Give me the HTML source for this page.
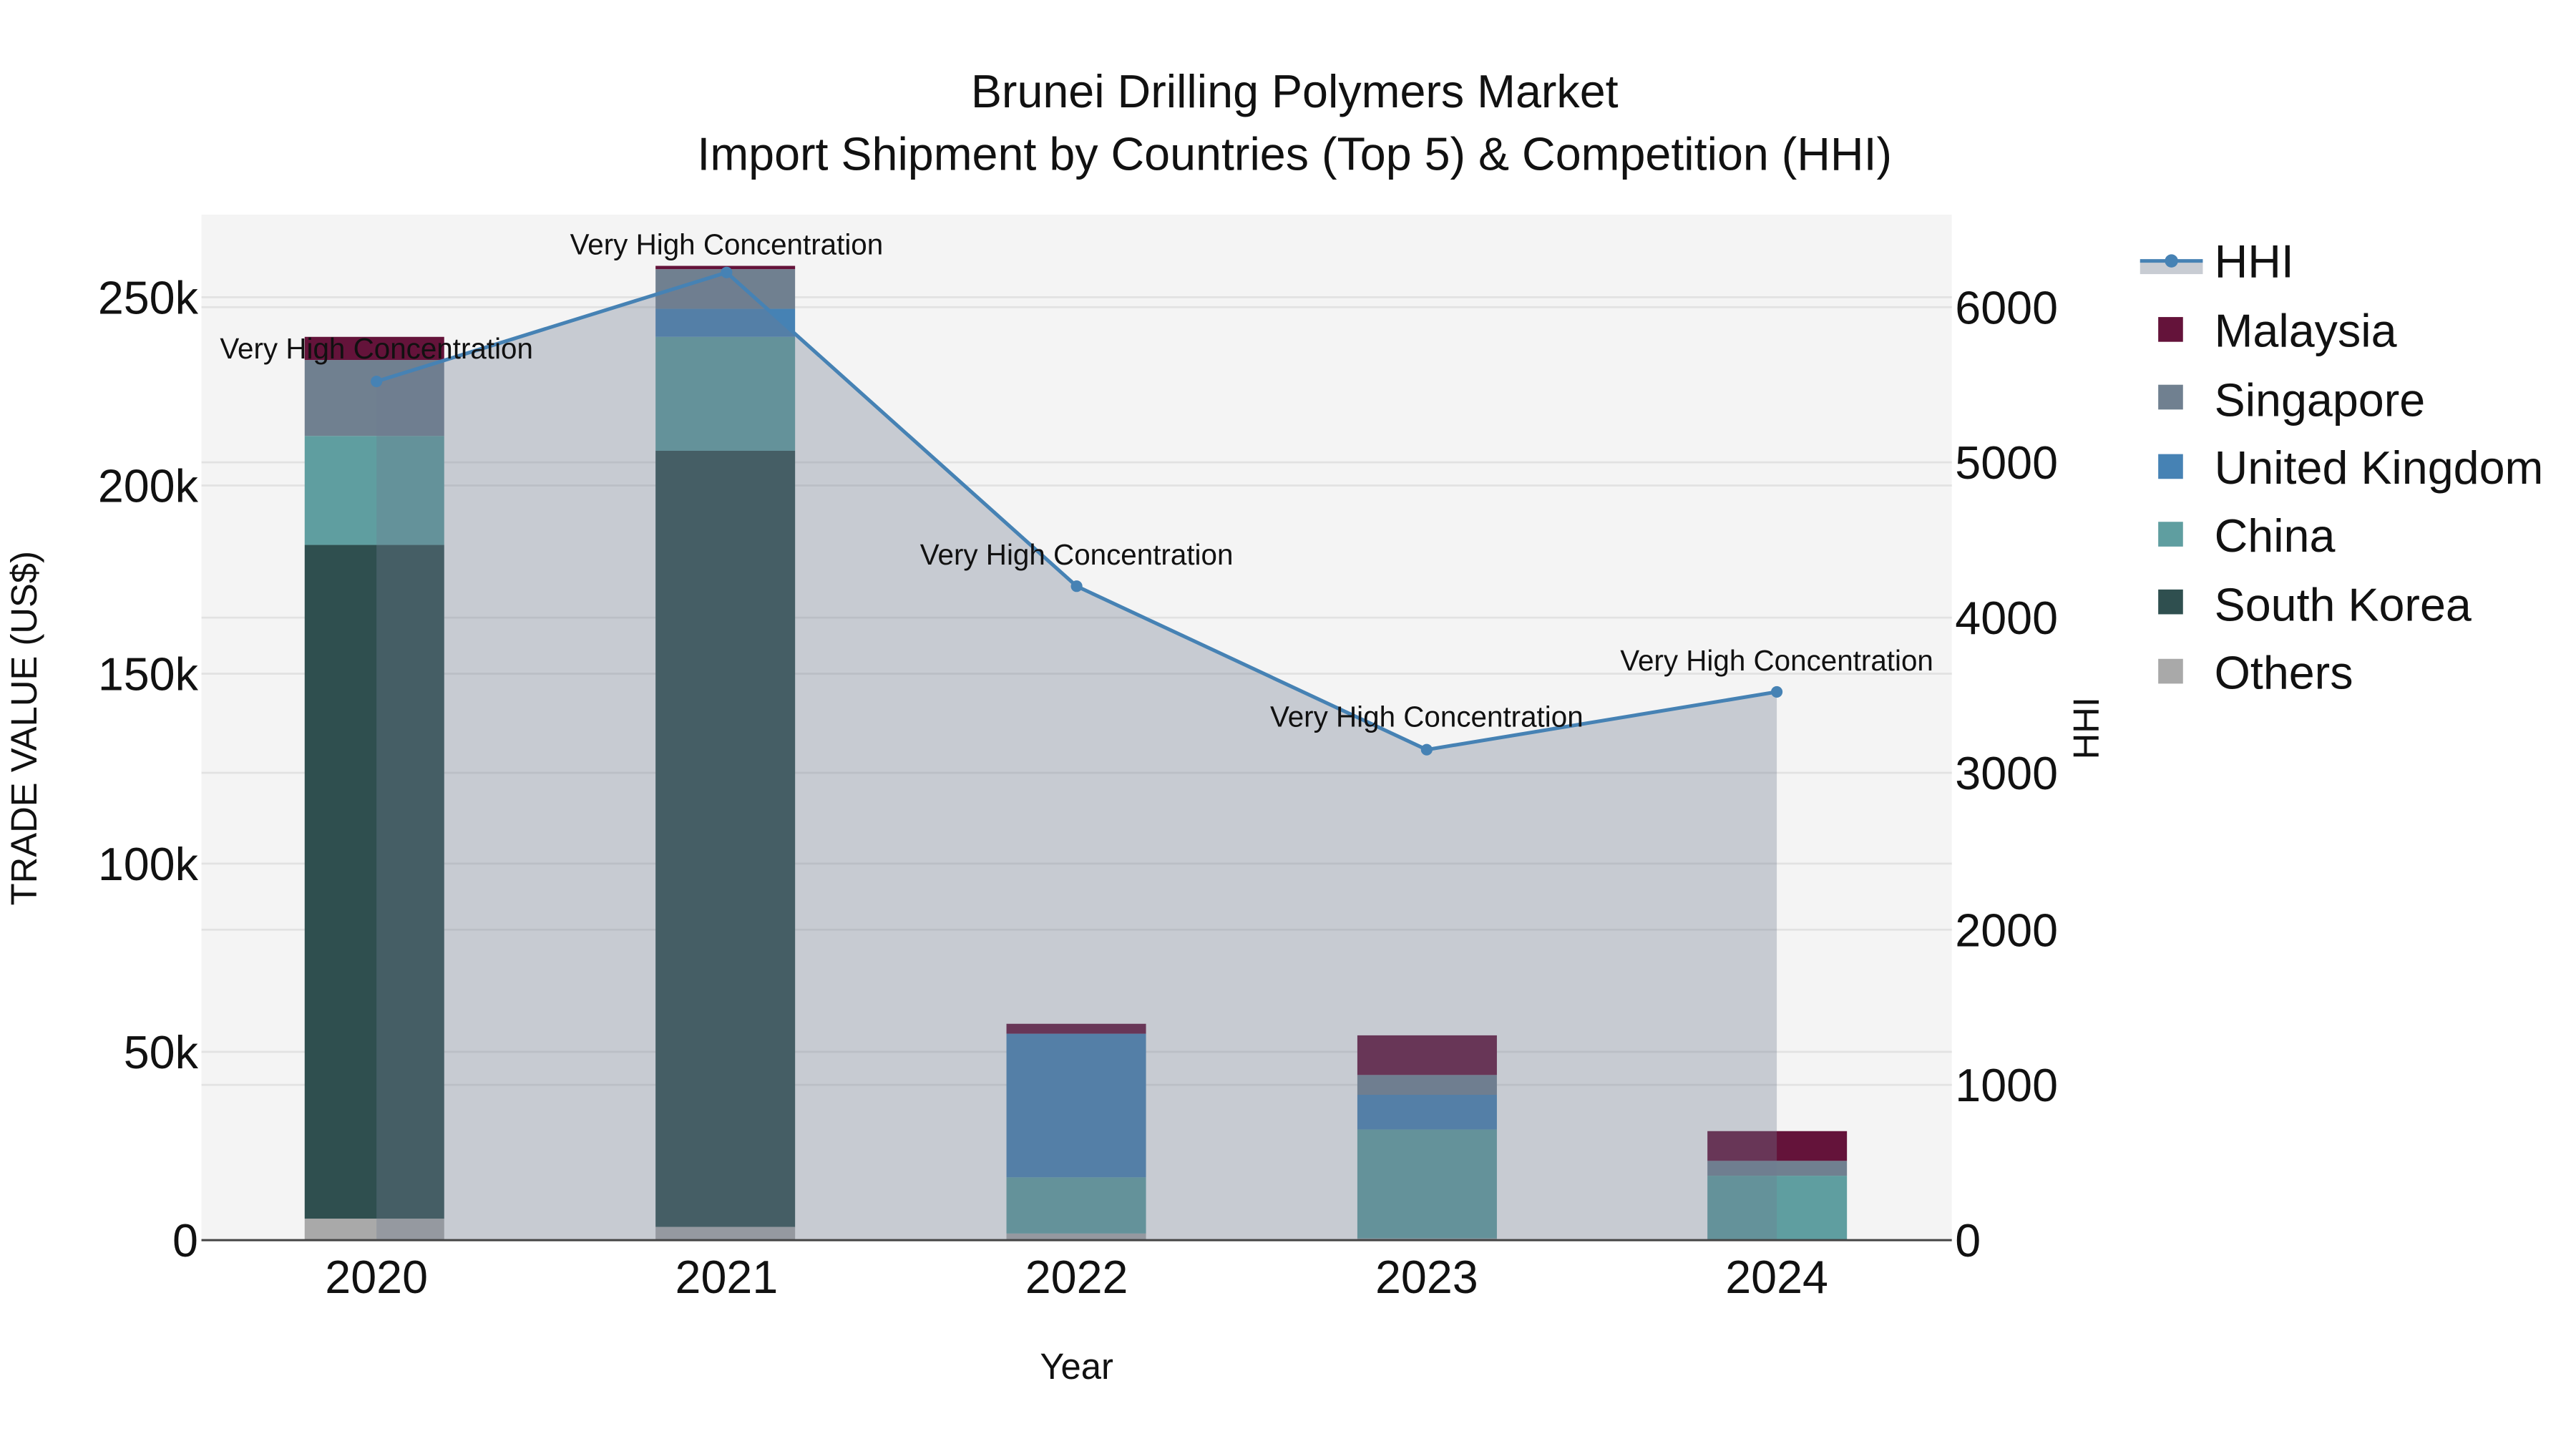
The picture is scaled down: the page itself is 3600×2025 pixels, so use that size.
<!DOCTYPE html>
<html><head><meta charset="utf-8"><style>html,body{margin:0;padding:0;background:#fff}svg{display:block}</style></head>
<body>
<svg width="3600" height="2025" viewBox="0 0 1560 877.5" preserveAspectRatio="none" xmlns="http://www.w3.org/2000/svg" font-family="'Liberation Sans', sans-serif">
<rect width="1560" height="877.5" fill="#fff"/>
<rect x="122" y="130" width="1060" height="621" fill="#f4f4f4"/>
<g stroke="#e2e2e2" stroke-width="1.2">
<line x1="122" x2="1182" y1="637" y2="637"/><line x1="122" x2="1182" y1="523" y2="523"/><line x1="122" x2="1182" y1="408" y2="408"/><line x1="122" x2="1182" y1="294" y2="294"/><line x1="122" x2="1182" y1="180" y2="180"/>
<line x1="122" x2="1182" y1="657" y2="657"/><line x1="122" x2="1182" y1="563" y2="563"/><line x1="122" x2="1182" y1="468" y2="468"/><line x1="122" x2="1182" y1="374" y2="374"/><line x1="122" x2="1182" y1="280" y2="280"/><line x1="122" x2="1182" y1="186" y2="186"/>
</g>
<rect x="184.5" y="738" width="84.5" height="13" fill="#a9a9a9"/>
<rect x="184.5" y="330" width="84.5" height="408" fill="#2f4f4f"/>
<rect x="184.5" y="264" width="84.5" height="66" fill="#5f9ea0"/>
<rect x="184.5" y="218" width="84.5" height="46" fill="#708090"/>
<rect x="184.5" y="204" width="84.5" height="14" fill="#64133a"/>
<rect x="397" y="743" width="84.5" height="8" fill="#a9a9a9"/>
<rect x="397" y="273" width="84.5" height="470" fill="#2f4f4f"/>
<rect x="397" y="204" width="84.5" height="69" fill="#5f9ea0"/>
<rect x="397" y="187" width="84.5" height="17" fill="#4682b4"/>
<rect x="397" y="163" width="84.5" height="24" fill="#708090"/>
<rect x="397" y="161" width="84.5" height="2" fill="#64133a"/>
<rect x="609.5" y="747" width="84.5" height="4" fill="#a9a9a9"/>
<rect x="609.5" y="713" width="84.5" height="34" fill="#5f9ea0"/>
<rect x="609.5" y="626" width="84.5" height="87" fill="#4682b4"/>
<rect x="609.5" y="620" width="84.5" height="6" fill="#64133a"/>
<rect x="822" y="750" width="84.5" height="1" fill="#a9a9a9"/>
<rect x="822" y="684" width="84.5" height="66" fill="#5f9ea0"/>
<rect x="822" y="663" width="84.5" height="21" fill="#4682b4"/>
<rect x="822" y="651" width="84.5" height="12" fill="#708090"/>
<rect x="822" y="627" width="84.5" height="24" fill="#64133a"/>
<rect x="1034" y="712" width="84.5" height="39" fill="#5f9ea0"/>
<rect x="1034" y="703" width="84.5" height="9" fill="#708090"/>
<rect x="1034" y="685" width="84.5" height="18" fill="#64133a"/>
<polygon points="228,751 228,231 440,165 652,355 864,454 1076,419 1076,751" fill="rgb(112,124,144)" fill-opacity="0.34"/>
<polyline points="228,231 440,165 652,355 864,454 1076,419" fill="none" stroke="#4682b4" stroke-width="2.2"/>
<g fill="#4682b4"><circle cx="228" cy="231" r="3.5"/><circle cx="440" cy="165" r="3.5"/><circle cx="652" cy="355" r="3.5"/><circle cx="864" cy="454" r="3.5"/><circle cx="1076" cy="419" r="3.5"/></g>
<line x1="122" x2="1182" y1="751" y2="751" stroke="#444" stroke-width="1.3"/>
<g font-size="17.5" fill="#111" text-anchor="middle">
<text x="228" y="217">Very High Concentration</text>
<text x="440" y="154">Very High Concentration</text>
<text x="652" y="342">Very High Concentration</text>
<text x="864" y="440">Very High Concentration</text>
<text x="1076" y="406">Very High Concentration</text>
</g>
<g font-size="28" fill="#111" text-anchor="middle">
<text x="784" y="65">Brunei Drilling Polymers Market</text>
<text x="784" y="103">Import Shipment by Countries (Top 5) &amp; Competition (HHI)</text>
</g>
<g font-size="28" fill="#111" text-anchor="end">
<text x="120" y="761">0</text><text x="120" y="647">50k</text><text x="120" y="533">100k</text><text x="120" y="418">150k</text><text x="120" y="304">200k</text><text x="120" y="190">250k</text>
</g>
<g font-size="28" fill="#111">
<text x="1184" y="761">0</text><text x="1184" y="667">1000</text><text x="1184" y="573">2000</text><text x="1184" y="478">3000</text><text x="1184" y="384">4000</text><text x="1184" y="290">5000</text><text x="1184" y="196">6000</text>
</g>
<g font-size="28" fill="#111" text-anchor="middle">
<text x="228" y="783">2020</text><text x="440" y="783">2021</text><text x="652" y="783">2022</text><text x="864" y="783">2023</text><text x="1076" y="783">2024</text>
</g>
<text x="652" y="835" font-size="22" fill="#111" text-anchor="middle">Year</text>
<text transform="translate(22,441) rotate(-90)" font-size="22" fill="#111" text-anchor="middle">TRADE VALUE (US$)</text>
<text transform="translate(1271,441) rotate(-90)" font-size="22" fill="#111" text-anchor="middle">HHI</text>
<rect x="1296" y="158" width="38" height="8" fill="#c8ccd3"/>
<line x1="1296" x2="1334" y1="158" y2="158" stroke="#4682b4" stroke-width="2.2"/>
<circle cx="1315" cy="158" r="4" fill="#4682b4"/>
<rect x="1307" y="192" width="15" height="15" fill="#64133a"/>
<rect x="1307" y="233" width="15" height="15" fill="#708090"/>
<rect x="1307" y="275" width="15" height="15" fill="#4682b4"/>
<rect x="1307" y="316" width="15" height="15" fill="#5f9ea0"/>
<rect x="1307" y="357" width="15" height="15" fill="#2f4f4f"/>
<rect x="1307" y="399" width="15" height="15" fill="#a9a9a9"/>
<g font-size="28" fill="#111">
<text x="1341" y="168">HHI</text><text x="1341" y="210">Malaysia</text><text x="1341" y="252">Singapore</text><text x="1341" y="293">United Kingdom</text><text x="1341" y="334">China</text><text x="1341" y="376">South Korea</text><text x="1341" y="417">Others</text>
</g>
</svg>
</body></html>
